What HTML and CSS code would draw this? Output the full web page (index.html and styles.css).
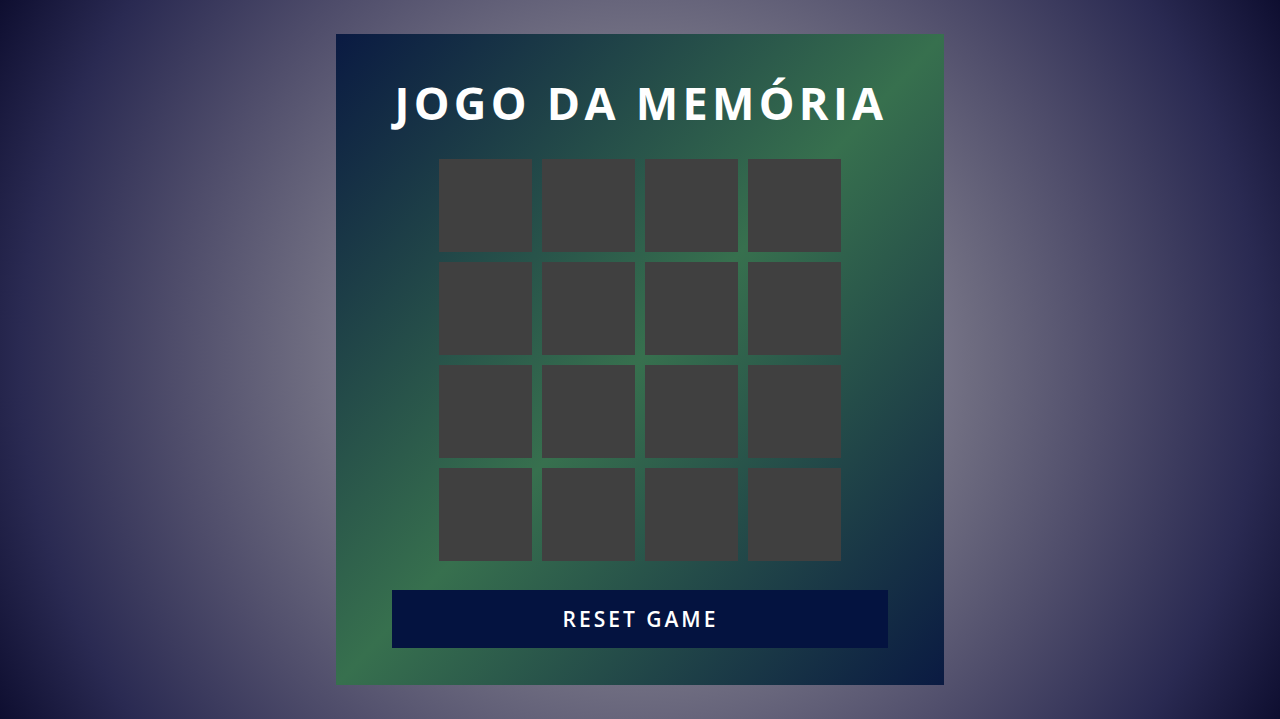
FILE: index.html
```html
<!DOCTYPE html>
<html lang="pt">
<head>
<meta charset="utf-8">
<title>Jogo da Memória</title>
<link rel="stylesheet" href="styles.css">
</head>
<body>
  <main class="container">
    <h2 class="title">JOGO DA MEMÓRIA</h2>
    <div class="game">
      <div class="item"></div><div class="item"></div><div class="item"></div><div class="item"></div>
      <div class="item"></div><div class="item"></div><div class="item"></div><div class="item"></div>
      <div class="item"></div><div class="item"></div><div class="item"></div><div class="item"></div>
      <div class="item"></div><div class="item"></div><div class="item"></div><div class="item"></div>
    </div>
    <button class="reset">RESET GAME</button>
  </main>
</body>
</html>
```

FILE: styles.css
```css
* {
  box-sizing: border-box;
  margin: 0;
  padding: 0;
}

html, body {
  height: 100%;
}

body {
  font-family: "Open Sans", "DejaVu Sans", sans-serif;
  display: flex;
  justify-content: center;
  align-items: center;
  min-height: 100vh;
  background: radial-gradient(circle farthest-corner at center,
    #bcb9c4 0%,
    #6e6c80 45%,
    #4e4c6a 64%,
    #2a2a52 84.5%,
    #0e0e30 100%);
}

.container {
  width: 608px;
  height: 651px;
  display: flex;
  flex-direction: column;
  align-items: center;
  padding: 36px 56px 0;
  background: linear-gradient(to bottom right, #0a1a42 0%, #37704e 50%, #0a1a42 100%);
}

.title {
  color: #fff;
  font-size: 45px;
  font-weight: 700;
  letter-spacing: 4.3px;
  text-indent: 2px;
  line-height: 65px;
  white-space: nowrap;
}

.game {
  margin-top: 24px;
  display: grid;
  grid-template-columns: repeat(4, 93px);
  grid-auto-rows: 93px;
  gap: 10px;
}

.item {
  background: #404040;
}

.reset {
  margin-top: 29px;
  width: 496px;
  height: 58px;
  border: none;
  background: #041340;
  color: #fff;
  font-family: "Open Sans", "DejaVu Sans", sans-serif;
  font-size: 21px;
  font-weight: 600;
  letter-spacing: 3px;
  text-indent: 1px;
  cursor: pointer;
}
```
